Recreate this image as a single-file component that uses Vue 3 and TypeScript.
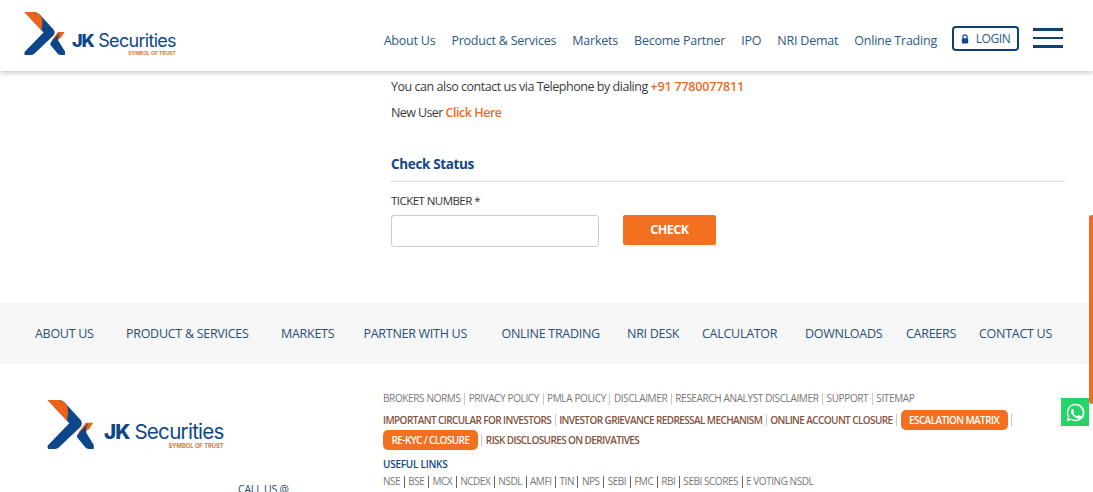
<script setup lang="ts">
const navItems: string[] = ['About Us', 'Product & Services', 'Markets', 'Become Partner', 'IPO', 'NRI Demat', 'Online Trading']
const footNav: { label: string; w: number }[] = [
  { label: 'ABOUT US', w: 91 },
  { label: 'PRODUCT & SERVICES', w: 155 },
  { label: 'MARKETS', w: 82.5 },
  { label: 'PARTNER WITH US', w: 138 },
  { label: 'ONLINE TRADING', w: 125.5 },
  { label: 'NRI DESK', w: 75 },
  { label: 'CALCULATOR', w: 103 },
  { label: 'DOWNLOADS', w: 101 },
  { label: 'CAREERS', w: 73 },
  { label: 'CONTACT US', w: 80 }
]
const topLinks: string[] = ['BROKERS NORMS', 'PRIVACY POLICY', 'PMLA POLICY', 'DISCLAIMER', 'RESEARCH ANALYST DISCLAIMER', 'SUPPORT', 'SITEMAP']
const useful: string[] = ['NSE', 'BSE', 'MCX', 'NCDEX', 'NSDL', 'AMFI', 'TIN', 'NPS', 'SEBI', 'FMC', 'RBI', 'SEBI SCORES', 'E VOTING NSDL']
</script>

<template>
  <div class="page">
    <header class="header">
      <a class="logo">
        <svg class="mark" viewBox="0 0 42 43" width="42" height="43">
          <path d="M0 0H9.5Q13 0 15.5 2.8L29 17.5Q31 20.5 29 23.5L9.5 42Q8.5 43 6.5 43H0.5Q-0.8 41 0.5 39.5L19 20.5Z" fill="#0d4689" transform="translate(0.5,0)"/>
          <path d="M0.5 0H9Q13 0 16 3Q19.5 7 18 14.5L17.5 18.5Z" fill="#ee6218"/>
          <path d="M34 20H40.5L37 25.5Q34 27 31 32L27.5 28.5Z" fill="#ee6218"/>
          <path d="M28 29L36 20.5Q33 27 34.5 29L41 39.5V43H36.5Q35 43 33.5 41.5L26.5 33Q25.5 31 28 29Z" fill="#0d4689"/>
        </svg>
        <span class="wordmark">
          <span class="brand"><b>JK</b> Securities</span>
          <span class="tag">SYMBOL OF TRUST</span>
        </span>
      </a>
      <nav class="nav">
        <a v-for="n in navItems" :key="n">{{ n }}</a>
      </nav>
      <button class="login">
        <svg viewBox="0 0 10 12" width="8" height="10"><path d="M2.4 5V3.4a2.6 2.6 0 0 1 5.2 0V5" fill="none" stroke="#0d4689" stroke-width="1.5"/><rect x="1" y="5" width="8" height="6.5" rx="1" fill="#0d4689"/></svg>
        LOGIN
      </button>
      <div class="burger"><i></i><i></i><i></i></div>
    </header>

    <main class="main">
      <p class="line">You can also contact us via Telephone by dialing <b class="orange">+91 7780077811</b></p>
      <p class="line second">New User <b class="orange">Click Here</b></p>
      <h2 class="title">Check Status</h2>
      <label class="label">TICKET NUMBER *</label>
      <div class="form-row">
        <input class="input" type="text" />
        <button class="check">CHECK</button>
      </div>
    </main>

    <nav class="foot-nav">
      <a v-for="f in footNav" :key="f.label" :style="{ width: f.w + 'px' }">{{ f.label }}</a>
    </nav>

    <footer class="footer">
      <div class="foot-left">
        <a class="logo small">
          <svg class="mark" viewBox="0 0 42 43" width="48" height="49">
            <path d="M0 0H9.5Q13 0 15.5 2.8L29 17.5Q31 20.5 29 23.5L9.5 42Q8.5 43 6.5 43H0.5Q-0.8 41 0.5 39.5L19 20.5Z" fill="#0d4689" transform="translate(0.5,0)"/>
            <path d="M0.5 0H9Q13 0 16 3Q19.5 7 18 14.5L17.5 18.5Z" fill="#ee6218"/>
            <path d="M34 20H40.5L37 25.5Q34 27 31 32L27.5 28.5Z" fill="#ee6218"/>
            <path d="M28 29L36 20.5Q33 27 34.5 29L41 39.5V43H36.5Q35 43 33.5 41.5L26.5 33Q25.5 31 28 29Z" fill="#0d4689"/>
          </svg>
          <span class="wordmark">
            <span class="brand"><b>JK</b> Securities</span>
            <span class="tag">SYMBOL OF TRUST</span>
          </span>
        </a>
        <div class="call">CALL US @</div>
      </div>
      <div class="foot-right">
        <div class="links grey">
          <template v-for="(t, i) in topLinks" :key="t"><span v-if="i" class="sep"></span><a>{{ t }}</a></template>
        </div>
        <div class="links brown row2">
          <a>IMPORTANT CIRCULAR FOR INVESTORS</a><span class="sep"></span>
          <a>INVESTOR GRIEVANCE REDRESSAL MECHANISM</a><span class="sep"></span>
          <a>ONLINE ACCOUNT CLOSURE</a><span class="sep"></span>
          <a class="pill">ESCALATION MATRIX</a><span class="sep"></span>
        </div>
        <div class="links brown row3">
          <a class="pill">RE-KYC / CLOSURE</a><span class="sep"></span>
          <a>RISK DISCLOSURES ON DERIVATIVES</a>
        </div>
        <div class="useful">USEFUL LINKS</div>
        <div class="links grey bottom">
          <template v-for="(t, i) in useful" :key="t"><span v-if="i" class="sep dark"></span><a>{{ t }}</a></template>
        </div>
      </div>
    </footer>

    <div class="thumb"></div>
    <a class="wa">
      <svg viewBox="0 0 24 24" width="21" height="21">
        <path fill="#fff" d="M12 2a10 10 0 0 0-8.6 15L2 22l5.2-1.4A10 10 0 1 0 12 2Zm0 1.8a8.2 8.2 0 1 1-4.3 15.2l-.4-.2-3 .8.8-2.9-.2-.4A8.2 8.2 0 0 1 12 3.800Zm-3.500 4.300c-.2 0-.5.100-.8.400-.3.300-1 1-1 2.400s1 2.800 1.200 3c.1.200 2 3.100 4.900 4.300 2.400 1 2.900.8 3.400.7.500 0 1.700-.7 1.900-1.300.2-.7.200-1.200.2-1.300-.1-.2-.3-.2-.6-.4l-2-1c-.3-.1-.5-.1-.7.200l-.9 1.100c-.2.200-.3.200-.6.100-.3-.2-1.200-.5-2.300-1.400-.9-.8-1.400-1.700-1.600-2-.2-.3 0-.5.100-.6l.5-.5.300-.5c.1-.2 0-.4 0-.5l-.9-2.200c-.2-.5-.4-.5-.6-.5h-.5Z"/>
      </svg>
    </a>
  </div>
</template>

<style>
html, body { margin: 0; background: #fff; overflow: hidden; }
</style>

<style scoped>
.page {
  position: relative;
  width: 1093px;
  height: 492px;
  overflow: hidden;
  background: #fff;
  font-family: "Open Sans", "Noto Sans", sans-serif;
}
.header {
  height: 71px;
  display: flex;
  align-items: flex-start;
  padding-right: 30px;
  box-sizing: border-box;
  box-shadow: 0 1px 6px rgba(0, 0, 0, .28);
  position: relative;
  z-index: 2;
  background: #fff;
}
.logo { display: flex; align-items: flex-start; margin: 12px 0 0 24px; }
.mark { display: block; flex: none; }
.wordmark { display: flex; flex-direction: column; margin: 20px 0 0 6px; color: #0d4689; }
.brand { font: 400 18px/18px "Inter", sans-serif; letter-spacing: -.7px; white-space: nowrap; }
.brand b { font-weight: 800; letter-spacing: -1px; }
.tag { align-self: flex-end; font: 700 5px/6px "Inter", sans-serif; color: #d9763a; white-space: nowrap; }
.nav {
  display: flex;
  gap: 16px;
  margin: 32px 0 0 auto;
  color: #2a5a85;
  font-size: 12.5px;
  line-height: 17px;
  letter-spacing: -.22px;
  white-space: nowrap;
}
.login {
  margin: 26px 0 0 15px;
  width: 67px;
  height: 25px;
  box-sizing: border-box;
  display: flex;
  align-items: center;
  justify-content: center;
  gap: 7px;
  padding: 0;
  border: 2px solid #0d3f72;
  border-radius: 4px;
  background: #fff;
  color: #2a5a85;
  font: 400 12px/1 "Open Sans", sans-serif;
  letter-spacing: -.4px;
}
.burger { display: flex; flex-direction: column; gap: 6px; margin: 28px 0 0 14px; width: 30px; }
.burger i { display: block; height: 2.5px; background: #0d4272; }
.main { padding: 7px 27px 0 391px; height: 225px; box-sizing: border-box; }
.line { margin: 0; font-size: 12.5px; line-height: 18px; color: #3b3b3b; letter-spacing: -.47px; }
.second { margin-top: 8px; letter-spacing: -.6px; }
.orange { color: #e96c28; font-weight: 600; letter-spacing: -.2px; }
.second .orange { letter-spacing: -.45px; }
.title {
  margin: 33px 0 0;
  padding-bottom: 8px;
  border-bottom: 1px dotted #c9c9c9;
  font-size: 13.5px;
  line-height: 18px;
  font-weight: 700;
  color: #0d4689;
  letter-spacing: -.35px;
}
.label { display: block; margin-top: 11px; font-size: 11.5px; line-height: 16px; color: #333; letter-spacing: -.55px; }
.form-row { display: flex; gap: 24px; margin-top: 6px; }
.input { width: 208px; height: 32px; box-sizing: border-box; border: 1px solid #ccc; border-radius: 3px; background: #fff; padding: 0; }
.check {
  width: 93px;
  height: 30px;
  border: 0;
  border-radius: 2px;
  background: #f37021;
  color: #fff;
  font: 700 12.5px/1 "Open Sans", sans-serif;
  letter-spacing: -.5px;
  padding: 0;
}
.foot-nav {
  height: 61px;
  margin-top: 7px;
  background: #f6f6f6;
  display: flex;
  align-items: center;
  padding-left: 35px;
  box-sizing: border-box;
  font-size: 12.5px;
  color: #2b4f75;
  letter-spacing: -.28px;
  white-space: nowrap;
}
.foot-nav a { display: block; flex: none; }
.footer { display: flex; }
.foot-left { width: 383px; flex: none; position: relative; }
.logo.small { margin: 36px 0 0 47px; }
.logo.small .wordmark { margin: 21px 0 0 9px; }
.logo.small .brand { font-size: 20.6px; line-height: 22px; letter-spacing: -.75px; }
.logo.small .tag { font-size: 5.8px; }
.call { margin: 34px 0 0 238px; font-size: 10.5px; line-height: 12px; color: #24456b; letter-spacing: -.2px; white-space: nowrap; }
.foot-right { padding-top: 28px; font-size: 10px; line-height: 13px; white-space: nowrap; }
.links { display: flex; align-items: center; }
.grey { color: #777; letter-spacing: -.36px; }
.brown { color: #84523c; font-weight: 600; letter-spacing: -.6px; }
.sep { display: inline-block; width: 1px; height: 12px; background: #c9c9c9; margin: 0 3.5px; flex: none; }
.sep.dark { background: #666; margin: 0 3.5px; }
.row2 { margin-top: 5px; height: 20px; }
.row3 { margin-top: 0; height: 20px; }
.pill {
  display: block;
  padding: 0 8.5px;
  height: 20px;
  line-height: 20px;
  background: #f37021;
  color: #fff;
  border-radius: 5px;
  font-weight: 600;
}
.useful { margin-top: 8px; color: #0d4689; font-weight: 600; letter-spacing: -.25px; }
.bottom { margin-top: 4px; letter-spacing: -.45px; }
.thumb { position: absolute; right: 0; top: 215px; width: 4px; height: 189px; background: #ee6c24; border-radius: 3px 0 0 3px; z-index: 3; }
.wa {
  position: absolute;
  left: 1061px;
  top: 398px;
  width: 28px;
  height: 28px;
  background: #25d366;
  display: flex;
  align-items: center;
  justify-content: center;
  z-index: 3;
}
</style>
